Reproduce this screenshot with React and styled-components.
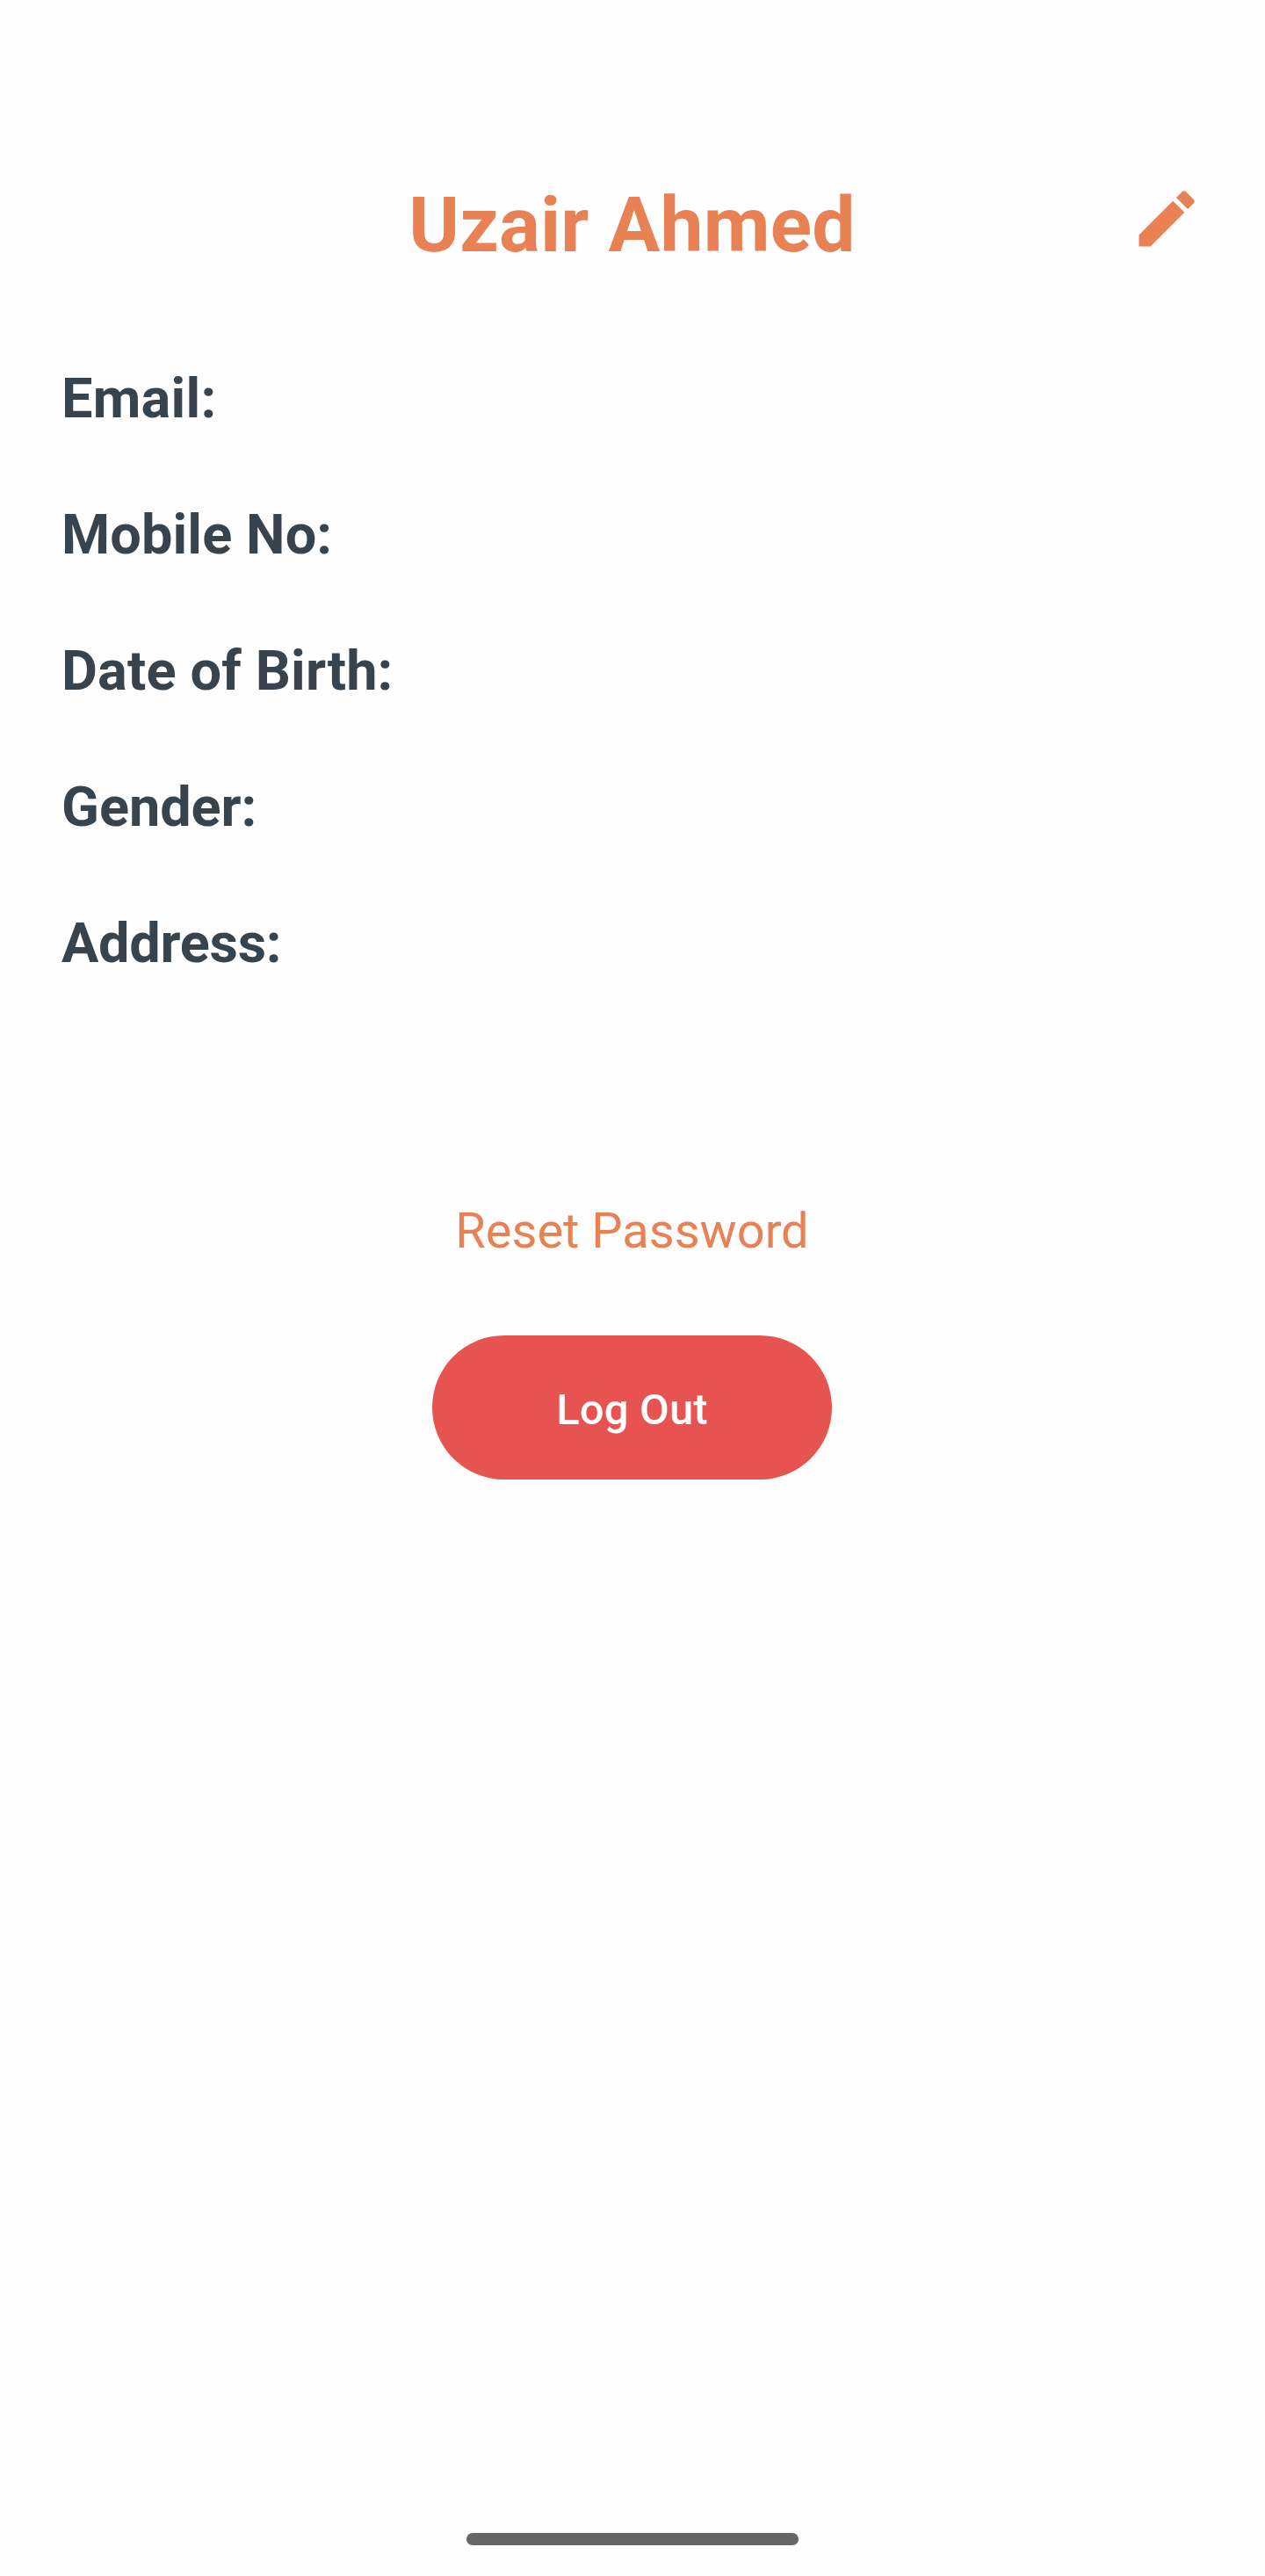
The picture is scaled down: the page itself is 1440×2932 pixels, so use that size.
import React from 'react';
import styled, { createGlobalStyle } from 'styled-components';

const GlobalStyle = createGlobalStyle`
  * { box-sizing: border-box; }
  body { margin: 0; background: #fefefe; }
`;

const Screen = styled.main`
  display: flex;
  flex-direction: column;
  align-items: center;
  height: 2932px;
  padding: 205px 0 35px;
  background: #fefefe;
  font-family: Roboto, 'Liberation Sans', sans-serif;
`;

const Header = styled.header`
  display: grid;
  grid-template-columns: 84px 1fr 84px;
  align-self: stretch;
  height: 103px;
  padding: 0 70px;
`;

const Name = styled.h1`
  grid-column: 2;
  margin: 0 1px 0 0;
  color: #e88154;
  font-size: 87.5px;
  font-weight: 700;
  letter-spacing: 0.2px;
  line-height: 103px;
  text-align: center;
  white-space: nowrap;
`;

const EditButton = styled.button`
  width: 84px;
  height: 84px;
  margin-top: 2px;
  padding: 0;
  border: 0;
  background: none;
  color: #e88154;
  cursor: pointer;

  svg { display: block; width: 100%; height: 100%; }
`;

const Details = styled.section`
  display: flex;
  flex-direction: column;
  align-self: stretch;
  gap: 81px;
  margin-top: 109px;
  padding: 0 70px;
`;

const Label = styled.div`
  color: #37444e;
  font-size: 63px;
  font-weight: 700;
  letter-spacing: ${(props) => props.$tracking}px;
  line-height: 74px;
`;

const ResetLink = styled.button`
  margin: 257px 1px 0 0;
  padding: 0;
  border: 0;
  background: none;
  color: #e88154;
  font-family: inherit;
  font-size: 56px;
  line-height: 66px;
  cursor: pointer;
`;

const LogOutButton = styled.button`
  width: 455px;
  height: 164px;
  margin: 86px 1px 0 0;
  padding: 5px 0 0;
  border: 0;
  border-radius: 82px;
  background: #e65350;
  color: #fff;
  font-family: inherit;
  font-size: 49px;
  font-weight: 500;
  letter-spacing: 0.15px;
  cursor: pointer;
`;

const HomeIndicator = styled.div`
  width: 378px;
  height: 14px;
  margin-top: auto;
  border-radius: 7px;
  background: #656565;
`;

const fields = [
  { label: 'Email:', tracking: 0.3 },
  { label: 'Mobile No:', tracking: 0.13 },
  { label: 'Date of Birth:', tracking: 0.16 },
  { label: 'Gender:', tracking: -0.04 },
  { label: 'Address:', tracking: -0.24 },
];

export default function App() {
  return (
    <>
      <GlobalStyle />
      <Screen>
        <Header>
          <Name>Uzair Ahmed</Name>
          <EditButton aria-label="Edit">
            <svg viewBox="0 0 24 24" fill="currentColor">
              <path d="M3 17.25V21h3.75L17.81 9.94l-3.75-3.75L3 17.25zM20.71 7.04a.996.996 0 0 0 0-1.41l-2.34-2.34a.996.996 0 0 0-1.41 0l-1.83 1.83 3.75 3.75 1.83-1.83z" />
            </svg>
          </EditButton>
        </Header>
        <Details>
          {fields.map(({ label, tracking }) => (
            <Label key={label} $tracking={tracking}>{label}</Label>
          ))}
        </Details>
        <ResetLink>Reset Password</ResetLink>
        <LogOutButton>Log Out</LogOutButton>
        <HomeIndicator />
      </Screen>
    </>
  );
}
